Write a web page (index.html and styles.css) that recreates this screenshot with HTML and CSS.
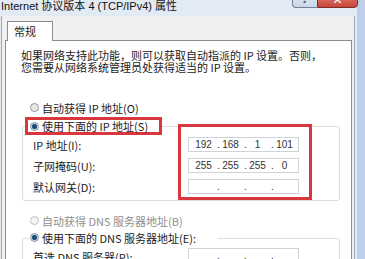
FILE: index.html
```html
<!DOCTYPE html>
<html>
<head>
    <meta charset="utf-8">
    <title>Internet 协议版本 4 (TCP/IPv4) 属性</title>
    <link rel="stylesheet" href="styles.css">
</head>
<body>
<div class="window">
    <div class="titlebar">
        <span class="title">Internet 协议版本 4 (TCP/IPv4) 属性</span>
        <div class="caption-buttons">
            <span class="btn-help">?</span>
            <span class="btn-close">✕</span>
        </div>
    </div>
    <div class="dialog">
        <div class="tabs"><span class="tab">常规</span></div>
        <div class="panel">
            <p class="intro">如果网络支持此功能，则可以获取自动指派的 IP 设置。否则，<br>您需要从网络系统管理员处获得适当的 IP 设置。</p>

            <div class="radio-row"><span class="radio"></span>自动获得 IP 地址(O)</div>
            <div class="group">
                <div class="group-head marked"><span class="radio checked"></span>使用下面的 IP 地址(S)</div>
                <div class="group-body">
                    <div class="labels">
                        <div class="label">IP 地址(I):</div>
                        <div class="label">子网掩码(U):</div>
                        <div class="label">默认网关(D):</div>
                    </div>
                    <div class="fields marked">
                        <div class="ip-field"><span class="seg">192</span><span class="dot">.</span><span class="seg">168</span><span class="dot">.</span><span class="seg">1</span><span class="dot">.</span><span class="seg">101</span></div>
                        <div class="ip-field"><span class="seg">255</span><span class="dot">.</span><span class="seg">255</span><span class="dot">.</span><span class="seg">255</span><span class="dot">.</span><span class="seg">0</span></div>
                        <div class="ip-field"><span class="seg"></span><span class="dot">.</span><span class="seg"></span><span class="dot">.</span><span class="seg"></span><span class="dot">.</span><span class="seg"></span></div>
                    </div>
                </div>
            </div>

            <div class="radio-row disabled next"><span class="radio"></span>自动获得 DNS 服务器地址(B)</div>
            <div class="group second">
                <div class="group-head plain"><span class="radio checked"></span>使用下面的 DNS 服务器地址(E):</div>
                <div class="group-body">
                    <div class="labels plain">
                        <div class="label">首选 DNS 服务器(P):</div>
                        <div class="label">备用 DNS 服务器(A):</div>
                    </div>
                    <div class="fields plain">
                        <div class="ip-field"><span class="seg"></span><span class="dot">.</span><span class="seg"></span><span class="dot">.</span><span class="seg"></span><span class="dot">.</span><span class="seg"></span></div>
                        <div class="ip-field"><span class="seg"></span><span class="dot">.</span><span class="seg"></span><span class="dot">.</span><span class="seg"></span><span class="dot">.</span><span class="seg"></span></div>
                    </div>
                </div>
            </div>
        </div>
    </div>
</div>
</body>
</html>
```

FILE: styles.css
```css
body {
  margin: 0;
  font-family: "Noto Sans CJK SC", sans-serif;
  font-size: 11px;
  color: #1b1b1b;
}

.window {
  width: 365px;
  height: 259px;
  overflow: hidden;
  display: flex;
  flex-direction: column;
  background: linear-gradient(to right, #e2eaf4 0 357px, #bcd1e9 357px);
}

/* title bar */
.titlebar {
  height: 16px;
  flex-shrink: 0;
  display: flex;
  align-items: flex-start;
}

.title {
  padding-left: 1px;
  line-height: 13px;
  font-family: "Liberation Sans", "Noto Sans CJK SC", sans-serif;
  font-size: 11px;
  color: #111;
}

.caption-buttons {
  display: flex;
  margin-left: auto;
  margin-right: 7px;
  margin-top: -10px;
}

.btn-help,
.btn-close {
  height: 18px;
  box-sizing: border-box;
  text-align: center;
  line-height: 18px;
  font-family: "DejaVu Sans", sans-serif;
  font-weight: bold;
}

.btn-help {
  width: 25px;
  border: 1px solid #6f8197;
  border-right: none;
  border-radius: 0 0 0 4px;
  background: linear-gradient(#e6edf5, #c9d7e7);
  color: #44546a;
  font-size: 11px;
}

.btn-close {
  width: 41px;
  border: 1px solid #7b2d27;
  border-radius: 0 0 4px 0;
  background: linear-gradient(#e3907e, #c8463a);
  color: #fff;
  font-size: 12px;
}

/* dialog */
.dialog {
  flex: 1;
  margin: 0 10px 0 1px;
  padding: 5px 2px 0 3px;
  background: #f0f0f0;
  border-left: 1px solid #9aa9ba;
  border-right: 1px solid #9aa9ba;
}

.tabs {
  display: flex;
  padding-left: 2px;
}

.tab {
  width: 46px;
  height: 20px;
  box-sizing: border-box;
  padding-left: 6px;
  line-height: 19px;
  margin-bottom: -1px;
  border: 1px solid #898c95;
  border-bottom: none;
  background: #fff;
  position: relative;
  z-index: 1;
}

.panel {
  height: 300px;
  padding: 0 11px 0 16px;
  border: 1px solid #898c95;
  background: #fff;
}

.intro {
  margin: 0 0 0 -1px;
  padding-top: 8px;
  line-height: 12px;
}

/* radios */
.radio-row {
  display: flex;
  align-items: center;
  height: 17px;
  padding-left: 8px;
  margin-top: 26px;
}

.radio-row.next {
  margin-top: 11px;
}

.radio {
  width: 9px;
  height: 9px;
  box-sizing: border-box;
  flex-shrink: 0;
  margin-right: 3px;
  border: 1px solid #8a8e94;
  border-radius: 50%;
  background: radial-gradient(circle, #e4e4e4 30%, #fbfbfb 100%);
}

.radio.checked {
  background: radial-gradient(circle, #1d4c74 0 2px, #5a8bb5 2.6px, #eef1f4 3.2px);
}

.disabled {
  color: #8e8e8e;
}

.disabled .radio {
  border-color: #c2c2c2;
  background: #f3f3f3;
}

/* group boxes */
.group {
  margin-top: 10px;
  border: 1px solid #d5dfe5;
  border-radius: 3px;
}

.group.second {
  margin-top: 9px;
}

.group-head {
  display: flex;
  align-items: center;
  box-sizing: border-box;
  line-height: 12px;
  margin-top: -10px;
  background: #fff;
}

.group-head.marked {
  width: 137px;
  margin-left: 2px;
  padding-left: 2px;
}

.group-head.plain {
  width: 189px;
  height: 17px;
  margin-left: 6px;
  padding-left: 1px;
}

.marked {
  border: 3px solid #d9363e;
}

.group-body {
  display: flex;
  margin-top: -11px;
}

.labels {
  width: 155px;
  box-sizing: border-box;
  padding: 14px 0 0 10px;
  display: flex;
  flex-direction: column;
  gap: 6px;
}

.label {
  height: 15px;
  line-height: 15px;
  white-space: nowrap;
}

.fields {
  display: flex;
  flex-direction: column;
  gap: 6px;
  padding: 10px 10px 3px 7px;
}

.group.second .group-body {
  margin-top: 0;
}

.labels.plain {
  width: 165px;
  padding-top: 4px;
}

.fields.plain {
  padding: 2px 0 0 0;
}

.ip-field {
  width: 111px;
  height: 15px;
  box-sizing: border-box;
  display: flex;
  padding-left: 5px;
  border: 1px solid #cdd3da;
  background: #fff;
  font-family: "Liberation Sans", sans-serif;
  font-size: 10px;
  line-height: 13px;
  color: #333;
}

.seg {
  width: 22px;
  box-sizing: border-box;
  padding-right: 3px;
  text-align: center;
}

.dot {
  width: 5px;
  text-align: center;
}
```
